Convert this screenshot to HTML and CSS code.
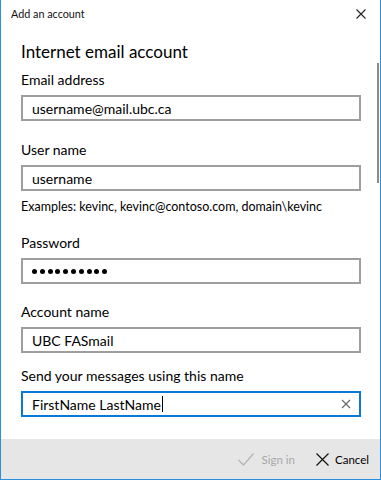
FILE: index.html
```html
<!DOCTYPE html>
<html>
<head>
<meta charset="utf-8">
<link rel="stylesheet" href="styles.css">
</head>
<body>
<div class="window">
  <div class="titlebar">
    <span class="title">Add an account</span>
    <svg class="close" width="12" height="12" viewBox="0 0 12 12"><path d="M1.5 1.5L10.5 10.5M10.5 1.5L1.5 10.5" stroke="#222" stroke-width="1.1" fill="none"/></svg>
  </div>
  <div class="content">
    <div class="scrollbar"></div>
    <h1 class="heading">Internet email account</h1>
    <div class="field f-email">
      <div class="label">Email address</div>
      <div class="input">username@mail.ubc.ca</div>
    </div>
    <div class="field f-user">
      <div class="label">User name</div>
      <div class="input">username</div>
      <div class="hint">Examples: kevinc, kevinc@contoso.com, domain\kevinc</div>
    </div>
    <div class="field f-pass">
      <div class="label">Password</div>
      <div class="input dots"><i></i><i></i><i></i><i></i><i></i><i></i><i></i><i></i><i></i><i></i></div>
    </div>
    <div class="field f-acct">
      <div class="label">Account name</div>
      <div class="input">UBC FASmail</div>
    </div>
    <div class="field f-send">
      <div class="label">Send your messages using this name</div>
      <div class="input focused"><span class="val">FirstName LastName</span><span class="caret"></span>
        <svg class="clear" width="10" height="10" viewBox="0 0 10 10"><path d="M1 1L9 9M9 1L1 9" stroke="#666" stroke-width="1.1" fill="none"/></svg>
      </div>
    </div>
  </div>
  <div class="footer">
    <div class="btn disabled">
      <svg width="16" height="13" viewBox="0 0 16 13"><path d="M0.5 7L5.5 12L15.5 0.5" stroke="#b4b4b4" stroke-width="1.2" fill="none"/></svg>
      <span>Sign in</span>
    </div>
    <div class="btn cancel">
      <svg width="13" height="13" viewBox="0 0 13 13"><path d="M0.5 0.5L12.5 12.5M12.5 0.5L0.5 12.5" stroke="#111" stroke-width="1.2" fill="none"/></svg>
      <span>Cancel</span>
    </div>
  </div>
</div>
</body>
</html>
```
FILE: styles.css
```css
html, body {
  margin: 0;
  padding: 0;
  background: #fff;
}
body {
  font-family: Lato, "Noto Sans", sans-serif;
  color: #000;
}
.window {
  width: 381px;
  height: 480px;
  box-sizing: border-box;
  border-left: 1px solid #2b8fe0;
  border-right: 1px solid #2b8fe0;
  border-bottom: 1px solid #2b8fe0;
  display: flex;
  flex-direction: column;
  background: #fff;
  overflow: hidden;
}
.titlebar {
  height: 27px;
  display: flex;
  align-items: center;
  justify-content: space-between;
  padding: 0 13px 0 10px;
  flex-shrink: 0;
}
.title {
  font-size: 10.8px;
  color: #111;
}
.close {
  display: block;
}
.content {
  position: relative;
  flex: 1;
  padding: 0 19px 0 20px;
}
.scrollbar {
  position: absolute;
  right: 1px;
  top: 36px;
  width: 2px;
  height: 120px;
  background: #8a8a8a;
}
.heading {
  margin: 11px 0 0 0;
  font-size: 17px;
  font-weight: 400;
  line-height: 28px;
  height: 28px;
}
.field .label {
  font-size: 14px;
  line-height: 20px;
  height: 20px;
}
.input {
  margin-top: 5px;
  height: 26px;
  box-sizing: border-box;
  border: 2px solid #9e9e9e;
  display: flex;
  align-items: center;
  padding: 0 8px 0 9px;
  font-size: 14px;
  position: relative;
}
.input.dots {
  gap: 2.8px;
}
.input.dots i {
  width: 5px;
  height: 5px;
  border-radius: 50%;
  background: #000;
}
.input.focused {
  border-color: #0a78d7;
}
.caret {
  width: 1px;
  height: 16px;
  background: #000;
  margin-left: 1px;
}
.clear {
  position: absolute;
  right: 8px;
  top: 6px;
}
.hint {
  font-size: 12.5px;
  line-height: 20px;
  margin-top: 6px;
}
.f-email { margin-top: 4px; }
.f-user { margin-top: 19px; }
.f-pass { margin-top: 16px; }
.f-acct { margin-top: 18px; }
.f-send { margin-top: 13px; }
.footer {
  height: 40px;
  background: #e6e6e6;
  display: flex;
  justify-content: flex-end;
  align-items: center;
  padding-right: 11px;
  gap: 21px;
  flex-shrink: 0;
}
.btn {
  display: flex;
  align-items: center;
  gap: 8px;
  font-size: 11.5px;
  color: #000;
}
.btn.cancel {
  gap: 6px;
}
.btn.disabled {
  color: #a8a8a8;
}
.btn svg {
  display: block;
}
```
